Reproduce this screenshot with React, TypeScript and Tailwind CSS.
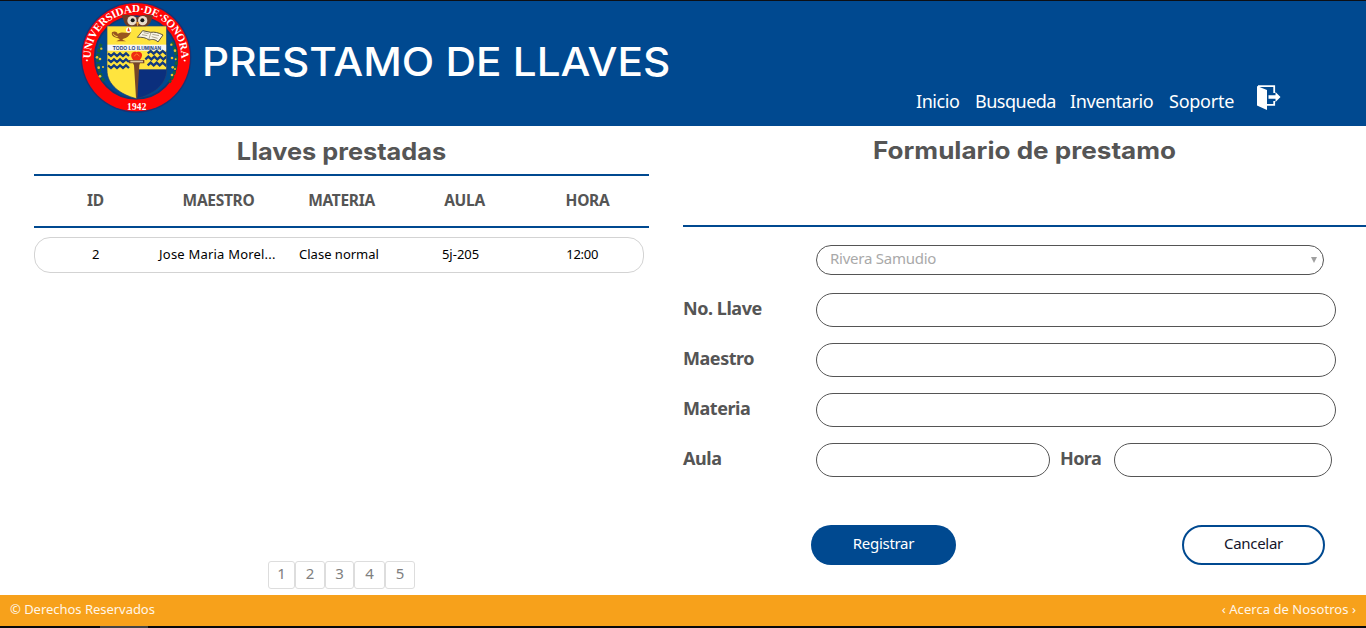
import React from "react";

const NAV = [
  { label: "Inicio", cls: "w-[59px] tracking-[-0.45px]" },
  { label: "Busqueda", cls: "w-[95px] tracking-[-0.5px]" },
  { label: "Inventario", cls: "w-[99px] tracking-[-0.4px]" },
  { label: "Soporte", cls: "w-[88px] tracking-[-0.25px]" },
];
const HEADS = ["ID", "MAESTRO", "MATERIA", "AULA", "HORA"];
const ROW = [
  { v: "2", cls: "" },
  { v: "Jose Maria Morel...", cls: "tracking-[0.2px]" },
  { v: "Clase normal", cls: "" },
  { v: "5j-205", cls: "" },
  { v: "12:00", cls: "tracking-[-0.3px]" },
];
const PAGES = [
  { n: 1, cls: "w-[27px]" },
  { n: 2, cls: "w-[30px]" },
  { n: 3, cls: "w-[29px]" },
  { n: 4, cls: "w-[31px]" },
  { n: 5, cls: "w-[30px]" },
];

function Logo() {
  return (
    <svg viewBox="0 0 360 360" className="h-[120px] w-[120px] shrink-0">
      <defs>
        <path id="arc" d="M50.5 214.8 A136 136 0 1 1 309.5 214.8" />
        <clipPath id="shield">
          <path d="M93 78 H272 V210 C272 255 230 284 182 296 C134 284 93 255 93 210 Z" />
        </clipPath>
      </defs>
      <circle cx="180" cy="172" r="166" fill="#1a3272" />
      <circle cx="180" cy="172" r="162" fill="#ff0505" />
      <circle cx="180" cy="172" r="124" fill="#004990" stroke="#12386f" strokeWidth="5" />
      <g fontFamily="'Liberation Serif', serif" fontWeight="700" fill="#fff">
        <text fontSize="33">
          <textPath href="#arc" startOffset="50%" textAnchor="middle" textLength="453" lengthAdjust="spacing">
            ·UNIVERSIDAD·DE·SONORA·
          </textPath>
        </text>
        <text x="182" y="329" fontSize="28" textAnchor="middle" textLength="58">1942</text>
      </g>
      <g clipPath="url(#shield)">
        <rect x="90" y="76" width="92" height="225" fill="#ffe43e" />
        <rect x="182" y="76" width="92" height="225" fill="#0b2f7d" />
        <rect x="90" y="76" width="184" height="132" fill="#ffe43e" />
        <rect x="90" y="134" width="184" height="18" fill="#f4f7fb" />
        <g fill="none" stroke="#123a80" strokeWidth="7">
          <path d="M96 160 l9 8 9-8 9 8 9-8 9 8 9-8 9 8" />
          <path d="M96 178 l9 8 9-8 9 8 9-8 9 8 9-8 9 8" />
          <path d="M96 196 l9 8 9-8 9 8 9-8 9 8 9-8 9 8" />
          <path d="M215 160 l9-7 9 8 9-8 9 8 9-8 9 8 9-8" />
          <path d="M208 178 l9-8 9 8 9-8 9 8 9-8 9 8 9-8" />
          <path d="M215 196 l9-8 9 8 9-8 9 8 9-8 9 8 9-8" />
        </g>
      </g>
      <text x="183" y="149" fontSize="14.5" fontWeight="700" fontFamily="'Liberation Sans', sans-serif" fill="#173a78" textAnchor="middle" textLength="145" lengthAdjust="spacingAndGlyphs">
        TODO LO ILUMINAN
      </text>
      <path d="M93 78 H272 V210 C272 255 230 284 182 296 C134 284 93 255 93 210 Z" fill="none" stroke="#27406c" strokeWidth="2" />
      <path d="M136 46 C155 42 168 44 183 52 C198 44 211 42 232 46 C226 60 224 76 208 79 H158 C143 76 145 60 136 46Z" fill="#6d3b27" />
      <circle cx="168" cy="62" r="14" fill="#e8dccb" />
      <circle cx="200" cy="62" r="14" fill="#e8dccb" />
      <circle cx="170" cy="61" r="6" fill="#171717" />
      <circle cx="199" cy="61" r="6" fill="#171717" />
      <path d="M180 66 h9 l-4 14z" fill="#e69a38" />
      <path d="M108 97 C116 91 125 97 125 102 C137 94 147 99 157 99 L165 96 C160 108 152 115 142 116 L139 119 L150 124 H121 L132 118 L126 115 C112 112 105 106 108 97Z" fill="#99551f" />
      <path d="M112 101 C113 106 118 109 125 110" fill="none" stroke="#ffe43e" strokeWidth="3" />
      <circle cx="158" cy="90" r="8" fill="#fff" />
      <path d="M157 82 l5 12 h-8z" fill="#e53c22" />
      <path d="M200 92 L224 97 C235 95 248 98 261 105 L246 126 C238 118 230 117 219 120 C210 113 199 111 184 112Z" fill="#f8f5e8" stroke="#5b5340" strokeWidth="3" />
      <path d="M225 97 L218 119 M203 98 L218 101 M198 104 L214 107 M229 103 L249 107 M227 110 L245 115" fill="none" stroke="#8c8264" strokeWidth="2" />
      <path d="M172 181 C158 165 170 151 182 157 C195 151 206 165 191 181Z" fill="#f02c12" />
      <path d="M175 169 q7-14 15 0" fill="none" stroke="#ff8424" strokeWidth="3" />
      <path d="M159 180 H205 V190 H192 L190 196 L184 293 H180 L174 196 L171 190 H159Z" fill="#754629" />
      <rect x="163" y="182" width="38" height="5" fill="#dbc8a4" />
      <g fill="none" stroke="#16613c" strokeWidth="9" strokeDasharray="11 4">
        <path d="M76 132 C60 165 62 211 85 244" />
        <path d="M288 126 C308 165 305 211 280 247" />
      </g>
      <g fill="#e8c52d">
        <circle cx="76" cy="146" r="3.5" /><circle cx="63" cy="172" r="4" /><circle cx="72" cy="177" r="4" />
        <circle cx="68" cy="203" r="4" /><circle cx="81" cy="201" r="3" /><circle cx="72" cy="229" r="4" />
        <circle cx="286" cy="134" r="3.5" /><circle cx="297" cy="152" r="4" /><circle cx="288" cy="174" r="4" />
        <circle cx="299" cy="178" r="3" /><circle cx="290" cy="202" r="4" /><circle cx="297" cy="207" r="3" /><circle cx="288" cy="225" r="4" />
      </g>
    </svg>
  );
}

function ExitIcon() {
  return (
    <svg viewBox="0 0 24 26" className="h-[26px] w-[24px] shrink-0">
      <path d="M0 1 L10 5 V25 L0 20.5 Z" fill="#fff" />
      <path d="M1 1.2 H17.2 V8 M17.2 16 V19.8 H9" fill="none" stroke="#fff" strokeWidth="1.8" />
      <path d="M11.5 10.3 H18.5 V7 L23.5 12 L18.5 17 V13.7 H11.5Z" fill="#fff" />
    </svg>
  );
}

const label = "w-[133px] text-[18px] leading-[31px] font-bold text-[#555] tracking-[-0.45px]";
const field = "h-[34px] rounded-[20px] border border-[#555] bg-white px-3 outline-none";

export default function App() {
  return (
    <div className="flex h-[628px] w-[1366px] flex-col overflow-hidden bg-white font-['Noto_Sans',sans-serif]">
      <div className="h-px bg-[#0d0f14]" />
      <header className="flex h-[125px] bg-[#004990] text-white">
        <div className="-mt-px ml-[76px] flex">
          <Logo />
          <h1 className="mt-[32px] ml-[6px] w-[701px] origin-left scale-x-[1.057] text-[40px] leading-[60px] font-medium whitespace-nowrap font-['Inter',sans-serif]">
            PRESTAMO DE LLAVES
          </h1>
        </div>
        <nav className="ml-[13px] flex text-[18px] leading-[30px] whitespace-nowrap">
          {NAV.map((n) => (
            <a key={n.label} className={`mt-[85px] ${n.cls}`}>{n.label}</a>
          ))}
          <a className="mt-[84px]"><ExitIcon /></a>
        </nav>
      </header>
      <main className="flex h-[469px]">
        <section className="flex w-[683px] flex-col pl-[34px]">
          <h2 className="h-[48px] w-[615px] scale-x-[1.055] pt-[7px] text-center text-[24px] leading-[38px] font-bold whitespace-nowrap text-[#555] font-['Inter',sans-serif]">
            Llaves prestadas
          </h2>
          <div className="grid h-[54px] w-[615px] grid-cols-5 border-y-2 border-[#004990] text-center text-[15.5px] leading-[49px] font-bold text-[#555]">
            {HEADS.map((h) => <span key={h} className="tracking-[-0.3px]">{h}</span>)}
          </div>
          <div className="mt-[9px] grid h-[36px] w-[610px] grid-cols-5 rounded-[16px] border border-[#d3d3d3] text-center text-[13px] leading-[33px] whitespace-nowrap text-black">
            {ROW.map((r) => <span key={r.v} className={r.cls}>{r.v}</span>)}
          </div>
          <div className="mt-auto mb-[6px] ml-[234px] flex text-center text-[15px] leading-[23px] text-[#808080]">
            {PAGES.map((p) => (
              <span key={p.n} className={`h-[28px] rounded-[3px] border border-[#ddd] ${p.cls}`}>{p.n}</span>
            ))}
          </div>
        </section>
        <section className="flex w-[683px] flex-col">
          <div className="h-[101px] border-b-2 border-[#004990] pt-[6px]">
            <h2 className="scale-x-[1.087] text-center text-[24px] leading-[38px] font-bold text-[#555] font-['Inter',sans-serif]">
              Formulario de prestamo
            </h2>
          </div>
          <div className="mt-[18px] ml-[133px] flex h-[30px] w-[508px] items-center justify-between rounded-[15px] border border-[#555] pr-[6px] pl-[13px] text-[#a9a9a9]">
            <span className="pb-[3px] text-[15px] leading-[25px] tracking-[-0.25px]">Rivera Samudio</span>
            <svg viewBox="0 0 6 6" className="h-[6px] w-[6px]"><path d="M0 0H6L3 6Z" fill="#a0a0a0" /></svg>
          </div>
          <div className="mt-[18px] flex flex-col gap-4">
            {["No. Llave", "Maestro", "Materia"].map((l) => (
              <div key={l} className="flex">
                <label className={label}>{l}</label>
                <input className={`w-[520px] ${field}`} />
              </div>
            ))}
            <div className="flex">
              <label className={label}>Aula</label>
              <input className={`w-[234px] ${field}`} />
              <label className="ml-[10px] w-[54px] text-[18px] leading-[31px] font-bold tracking-[-0.6px] text-[#555]">Hora</label>
              <input className={`w-[218px] ${field}`} />
            </div>
          </div>
          <div className="mt-[48px] ml-[128px] flex w-[514px] justify-between text-[15px] tracking-[-0.3px]">
            <button className="h-[40px] w-[145px] rounded-[20px] bg-[#004990] pb-[4px] text-white">Registrar</button>
            <button className="h-[40px] w-[143px] rounded-[20px] border-2 border-[#004990] pb-[4px] text-[#15152a]">Cancelar</button>
          </div>
        </section>
      </main>
      <footer className="flex h-[31px] justify-between bg-[#f7a11b] px-[10px] text-[13px] leading-[28px] text-[#fff6e8]">
        <span className="tracking-[-0.03px]">© Derechos Reservados</span>
        <span className="tracking-[0.05px]">‹ Acerca de Nosotros ›</span>
      </footer>
      <div className="flex h-[2px] bg-[#07080c]"><div className="ml-[100px] w-[48px] bg-[#444]" /></div>
    </div>
  );
}
